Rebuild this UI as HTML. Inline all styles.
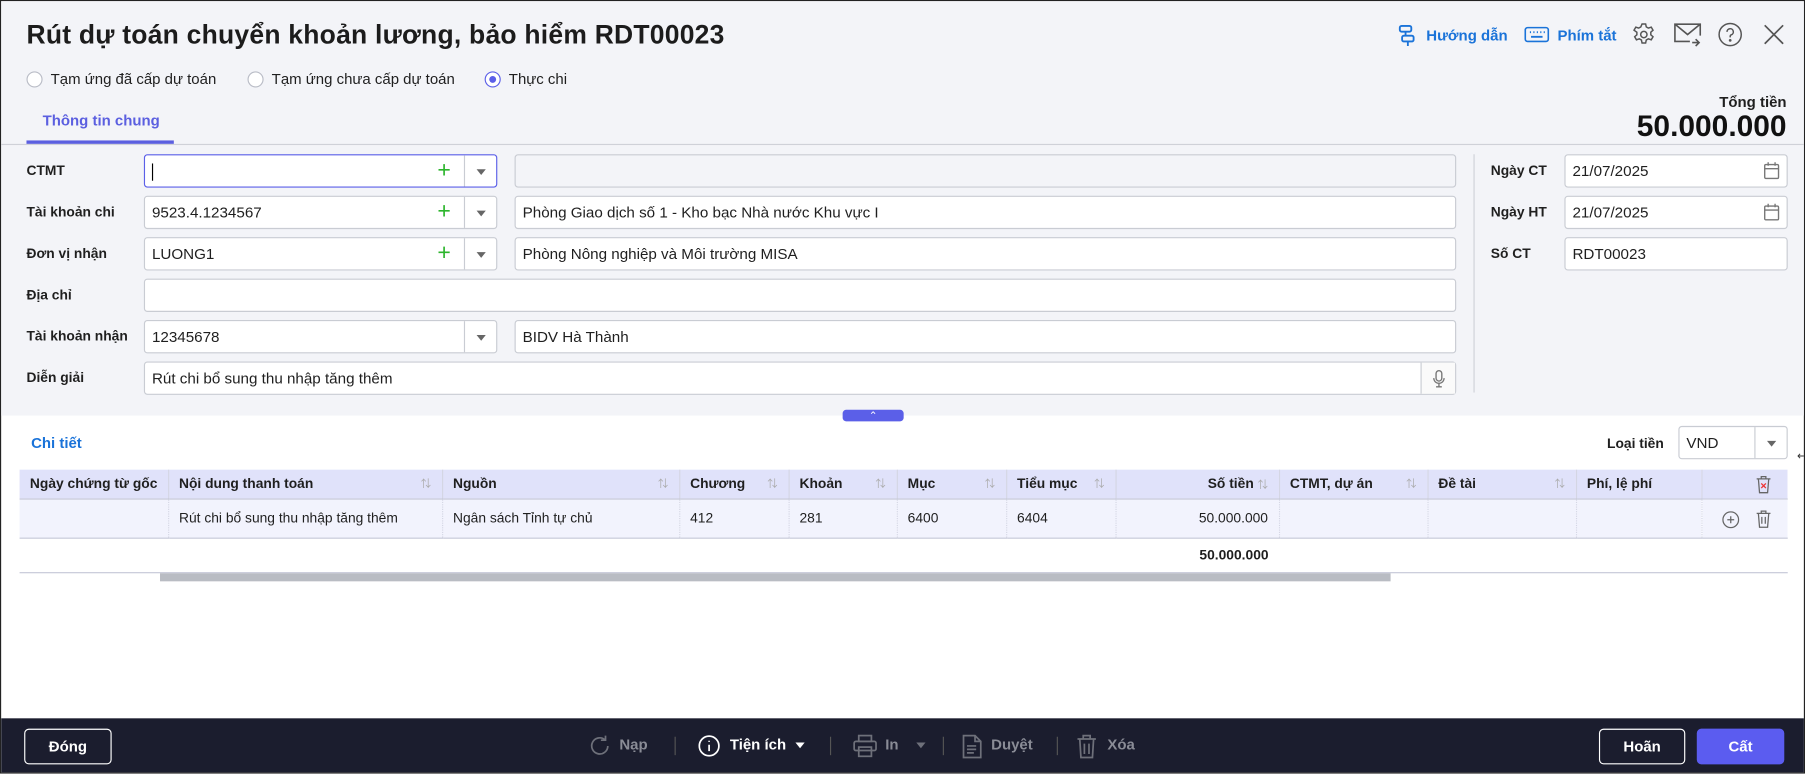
<!DOCTYPE html>
<html><head><meta charset="utf-8"><style>
*{box-sizing:border-box;margin:0;padding:0}
html,body{width:1805px;height:774px;overflow:hidden;background:#fff}
#w{position:absolute;left:0;top:0;width:1568px;height:672px;transform:scale(1.15115);transform-origin:0 0;font-family:"Liberation Sans","Noto Sans CJK SC",sans-serif;color:#1f1f1f;font-size:13px;border:1px solid #222;overflow:hidden}
.a{position:absolute}
.top{left:0;top:0;width:1568px;height:360px;background:#f3f4f8}
.lbl{position:absolute;font-weight:bold;font-size:12px;left:22px}
.in{position:absolute;height:29px;background:#fff;border:1px solid #c9ccd3;border-radius:3px;font-size:13.2px;line-height:27px;padding-left:6px}
.plus{position:absolute;color:#2db52d;font-size:20px;line-height:27px;top:0}
.dd{position:absolute;top:0;width:28px;height:27px;border-left:1px solid #c9ccd3}
.dd:after{content:"";position:absolute;left:10px;top:12px;border:4px solid transparent;border-top:5px solid #666}
.rad{position:absolute;top:61px;width:14px;height:14px;border:1px solid #b9bcc6;border-radius:50%;background:#fff}
.rt{position:absolute;top:60px;font-size:13px}
th,td{font-size:12px;text-align:left;padding:0 9px;border-right:1px solid #d4d6e4;white-space:nowrap}
th{height:25px;background:#e0e2fa;font-weight:bold;border-bottom:1px solid #c5c8d8}
td{height:34px;background:#f2f3fd;border-right:1px dotted #d4d6e4;border-bottom:1px solid #c5c8d8}
table{border-collapse:collapse;position:absolute;left:16px;top:407px;width:1536px;table-layout:fixed}
.s{color:#aaa;font-weight:normal;float:right;font-size:9px}
.tb{position:absolute;top:638px;font-size:13px;font-weight:bold;color:#8a8c96}
.sep{position:absolute;top:639px;width:1px;height:16px;background:#555}
</style></head><body><div id="w">
<div class="a top"></div>
<div class="a" style="left:22px;top:16px;font-size:23px;letter-spacing:0.2px;font-weight:bold;color:#1c1c1c">Rút dự toán chuyển khoản lương, bảo hiểm RDT00023</div>
<svg class="a" style="left:1212px;top:20px" width="18" height="20" viewBox="0 0 18 20" fill="none" stroke="#1a73d9" stroke-width="1.6"><rect x="3" y="1.5" width="10" height="5" rx="1.5"/><rect x="5" y="10" width="10" height="5" rx="1.5"/><path d="M8 6.5v3.5M10 15v4"/></svg>
<div class="a" style="left:1238px;top:22px;color:#1a73d9;font-weight:bold">Hướng dẫn</div>
<svg class="a" style="left:1323px;top:22px" width="22" height="14" viewBox="0 0 22 14" fill="none" stroke="#1a73d9" stroke-width="1.4"><rect x="1" y="1" width="20" height="12" rx="2"/><path d="M5 5h1M8 5h1M11 5h1M14 5h1M17 5h1M6 9h10" stroke-width="1.6"/></svg>
<div class="a" style="left:1352px;top:22px;color:#1a73d9;font-weight:bold">Phím tắt</div>
<svg class="a" style="left:1416px;top:18px" width="22" height="22" viewBox="0 0 24 24" fill="none" stroke="#555" stroke-width="1.4"><circle cx="12" cy="12" r="3"/><path d="M10.3 2h3.4l.6 2.8 2 1.1 2.7-.9 1.7 2.9-2.1 1.9v2.4l2.1 1.9-1.7 2.9-2.7-.9-2 1.1-.6 2.8h-3.4l-.6-2.8-2-1.1-2.7.9-1.7-2.9 2.1-1.9v-2.4L2.7 7.9l1.7-2.9 2.7.9 2-1.1z"/></svg>
<svg class="a" style="left:1453px;top:19px" width="24" height="22" viewBox="0 0 24 22" fill="none" stroke="#555" stroke-width="1.4"><path d="M14 16H1V1h22v10M1 1l11 9 11-9M16 17h6M19 14l3 3-3 3"/></svg>
<svg class="a" style="left:1491px;top:18px" width="22" height="22" viewBox="0 0 24 24" fill="none" stroke="#555" stroke-width="1.4"><circle cx="12" cy="12" r="10.5"/><path d="M9 9.5a3 3 0 1 1 4 2.8c-.7.3-1 .8-1 1.6v.8"/><circle cx="12" cy="17.5" r=".6" fill="#555"/></svg>
<svg class="a" style="left:1531px;top:20px" width="18" height="18" viewBox="0 0 18 18" stroke="#555" stroke-width="1.5"><path d="M1 1l16 16M17 1L1 17"/></svg>
<div class="rad" style="left:22px"></div><div class="rt" style="left:43px">Tạm ứng đã cấp dự toán</div>
<div class="rad" style="left:214px"></div><div class="rt" style="left:235px">Tạm ứng chưa cấp dự toán</div>
<div class="rad" style="left:420px;border-color:#5b5fe8"><div style="position:absolute;left:3px;top:3px;width:6px;height:6px;border-radius:50%;background:#5b5fe8"></div></div><div class="rt" style="left:441px">Thực chi</div>
<div class="a" style="left:36px;top:96px;color:#5b5fe0;font-weight:bold">Thông tin chung</div>
<div class="a" style="left:22px;top:121px;width:128px;height:3px;background:#5b5fe0"></div>
<div class="a" style="left:0;top:124px;width:1568px;height:1px;background:#cfd1d8"></div>
<div class="a" style="right:15px;top:80px;font-weight:bold;font-size:13px">Tổng tiền</div>
<div class="a" style="right:15px;top:93px;font-weight:bold;font-size:26px;color:#111">50.000.000</div>

<div class="lbl" style="top:140px">CTMT</div>
<div class="in" style="left:124px;top:133px;width:307px;border-color:#5b5fe8"><span style="border-left:1px solid #000;height:15px;display:inline-block;vertical-align:middle"></span><span class="plus" style="left:254px">+</span><div class="dd" style="left:277px"></div></div>
<div class="in" style="left:446px;top:133px;width:818px;background:#f3f4f8"></div>
<div class="lbl" style="top:176px">Tài khoản chi</div>
<div class="in" style="left:124px;top:169px;width:307px">9523.4.1234567<span class="plus" style="left:254px">+</span><div class="dd" style="left:277px"></div></div>
<div class="in" style="left:446px;top:169px;width:818px">Phòng Giao dịch số 1 - Kho bạc Nhà nước Khu vực I</div>
<div class="lbl" style="top:212px">Đơn vị nhận</div>
<div class="in" style="left:124px;top:205px;width:307px">LUONG1<span class="plus" style="left:254px">+</span><div class="dd" style="left:277px"></div></div>
<div class="in" style="left:446px;top:205px;width:818px">Phòng Nông nghiệp và Môi trường MISA</div>
<div class="lbl" style="top:248px">Địa chỉ</div>
<div class="in" style="left:124px;top:241px;width:1140px"></div>
<div class="lbl" style="top:284px">Tài khoản nhận</div>
<div class="in" style="left:124px;top:277px;width:307px">12345678<div class="dd" style="left:277px"></div></div>
<div class="in" style="left:446px;top:277px;width:818px">BIDV Hà Thành</div>
<div class="lbl" style="top:320px">Diễn giải</div>
<div class="in" style="left:124px;top:313px;width:1140px">Rút chi bổ sung thu nhập tăng thêm<div style="position:absolute;left:1108px;top:0;width:30px;height:27px;border-left:1px solid #c9ccd3;background:#fafafa"><svg style="position:absolute;left:9px;top:6px" width="12" height="16" viewBox="0 0 12 16" fill="none" stroke="#777" stroke-width="1.2"><rect x="3.5" y="1" width="5" height="9" rx="2.5"/><path d="M1.5 7.5a4.5 4.5 0 0 0 9 0M6 12v3M3.5 15h5"/></svg></div></div>
<div class="a" style="left:1279px;top:133px;width:1px;height:207px;background:#cfd1d8"></div>
<div class="lbl" style="left:1294px;top:140px">Ngày CT</div>
<div class="in" style="left:1358px;top:133px;width:194px">21/07/2025<svg style="position:absolute;right:6px;top:5px" width="14" height="16" viewBox="0 0 14 16" fill="none" stroke="#777" stroke-width="1.2"><rect x="1" y="3" width="12" height="12" rx="1"/><path d="M1 6.5h12M4 1v3M10 1v3"/></svg></div>
<div class="lbl" style="left:1294px;top:176px">Ngày HT</div>
<div class="in" style="left:1358px;top:169px;width:194px">21/07/2025<svg style="position:absolute;right:6px;top:5px" width="14" height="16" viewBox="0 0 14 16" fill="none" stroke="#777" stroke-width="1.2"><rect x="1" y="3" width="12" height="12" rx="1"/><path d="M1 6.5h12M4 1v3M10 1v3"/></svg></div>
<div class="lbl" style="left:1294px;top:212px">Số CT</div>
<div class="in" style="left:1358px;top:205px;width:194px">RDT00023</div>

<div class="a" style="left:731px;top:355px;width:53px;height:10px;background:#5b5fe8;border-radius:3px;color:#fff;font-size:9px;text-align:center;line-height:10px">&#8963;</div>
<div class="a" style="left:26px;top:376px;color:#1a73d9;font-weight:bold">Chi tiết</div>
<div class="a" style="left:1395px;top:377px;font-weight:bold;font-size:12px">Loại tiền</div>
<div class="in" style="left:1457px;top:369px;width:95px">VND<div class="dd" style="left:65px"></div></div>
<table><colgroup><col style="width:129px"><col style="width:238px"><col style="width:206px"><col style="width:95px"><col style="width:94px"><col style="width:95px"><col style="width:95px"><col style="width:142px"><col style="width:129px"><col style="width:129px"><col style="width:109px"><col style="width:75px"></colgroup>
<tr><th>Ngày chứng từ gốc</th><th>Nội dung thanh toán<span class="s">⇅</span></th><th>Nguồn<span class="s">⇅</span></th><th>Chương<span class="s">⇅</span></th><th>Khoản<span class="s">⇅</span></th><th>Mục<span class="s">⇅</span></th><th>Tiểu mục<span class="s">⇅</span></th><th style="text-align:right">Số tiền <span class="s" style="float:none">⇅</span></th><th>CTMT, dự án<span class="s">⇅</span></th><th>Đề tài<span class="s">⇅</span></th><th>Phí, lệ phí</th><th style="border-right:0;position:relative"><svg style="position:absolute;right:14px;top:5px" width="14" height="16" viewBox="0 0 14 16" fill="none" stroke="#666" stroke-width="1.1"><path d="M1 3h12M5 3V1h4v2M2.5 3l1 12h7l1-12"/><path d="M5 7l4 4M9 7l-4 4" stroke="#e33"/></svg></th></tr>
<tr><td></td><td>Rút chi bổ sung thu nhập tăng thêm</td><td>Ngân sách Tỉnh tự chủ</td><td>412</td><td>281</td><td>6400</td><td>6404</td><td style="text-align:right">50.000.000</td><td></td><td></td><td></td><td style="border-right:0;position:relative"><svg style="position:absolute;right:42px;top:10px" width="15" height="15" viewBox="0 0 15 15" fill="none" stroke="#666" stroke-width="1.1"><circle cx="7.5" cy="7.5" r="6.8"/><path d="M7.5 4.5v6M4.5 7.5h6"/></svg><svg style="position:absolute;right:14px;top:9px" width="14" height="16" viewBox="0 0 14 16" fill="none" stroke="#666" stroke-width="1.1"><path d="M1 3h12M5 3V1h4v2M2.5 3l1 12h7l1-12M5.5 6v6M8.5 6v6"/></svg></td></tr>
</table>
<div class="a" style="left:900px;top:474px;width:201px;text-align:right;font-weight:bold;font-size:12px">50.000.000</div>
<div class="a" style="left:16px;top:496px;width:1536px;height:1px;background:#c5c8d8"></div>
<div class="a" style="left:138px;top:497px;width:1069px;height:7px;background:#b9bcc3"></div>
<div class="a" style="left:1560px;top:390px;font-size:10px;color:#333">&#10231;</div>

<div class="a" style="left:0;top:623px;width:1568px;height:49px;background:#1b1d2e"></div>
<div class="a" style="left:20px;top:632px;width:76px;height:31px;border:1px solid #fff;border-radius:4px;color:#fff;font-weight:bold;text-align:center;line-height:29px">Đóng</div>
<div class="a" style="left:1388px;top:632px;width:75px;height:31px;border:1px solid #fff;border-radius:4px;color:#fff;font-weight:bold;text-align:center;line-height:29px">Hoãn</div>
<div class="a" style="left:1473px;top:632px;width:76px;height:31px;background:#5b5cf0;border-radius:4px;color:#fff;font-weight:bold;text-align:center;line-height:31px">Cất</div>
<svg class="a" style="left:510px;top:637px" width="20" height="20" viewBox="0 0 20 20" fill="none" stroke="#6e707a" stroke-width="1.5"><path d="M17 10a7 7 0 1 1-2.5-5.4M15 1v4h-4"/></svg>
<div class="tb" style="left:537px">Nạp</div>
<div class="sep" style="left:585px"></div>
<svg class="a" style="left:605px;top:637px" width="20" height="20" viewBox="0 0 20 20" fill="none" stroke="#fff" stroke-width="1.5"><circle cx="10" cy="10" r="8.5"/><path d="M10 5.5v1M10 9v5.5"/></svg>
<div class="tb" style="left:633px;color:#fff">Tiện ích</div>
<div class="a" style="left:690px;top:644px;border:4px solid transparent;border-top:5px solid #fff"></div>
<div class="sep" style="left:720px"></div>
<svg class="a" style="left:740px;top:637px" width="21" height="20" viewBox="0 0 21 20" fill="none" stroke="#6e707a" stroke-width="1.5"><rect x="5" y="1" width="11" height="5"/><rect x="1" y="6" width="19" height="8" rx="1.5"/><rect x="5" y="11" width="11" height="8"/></svg>
<div class="tb" style="left:768px">In</div>
<div class="a" style="left:795px;top:644px;border:4px solid transparent;border-top:5px solid #6e707a"></div>
<div class="sep" style="left:818px"></div>
<svg class="a" style="left:835px;top:637px" width="17" height="21" viewBox="0 0 17 21" fill="none" stroke="#6e707a" stroke-width="1.5"><path d="M1 1h10l5 5v14H1zM11 1v5h5M4 10h8M4 13h8M4 16h6"/></svg>
<div class="tb" style="left:860px">Duyệt</div>
<div class="sep" style="left:917px"></div>
<svg class="a" style="left:934px;top:637px" width="18" height="21" viewBox="0 0 18 21" fill="none" stroke="#6e707a" stroke-width="1.5"><path d="M1 4h16M6 4V1h6v3M3 4l1 16h10l1-16M7 8v9M11 8v9"/></svg>
<div class="tb" style="left:961px">Xóa</div>
</div></body></html>
